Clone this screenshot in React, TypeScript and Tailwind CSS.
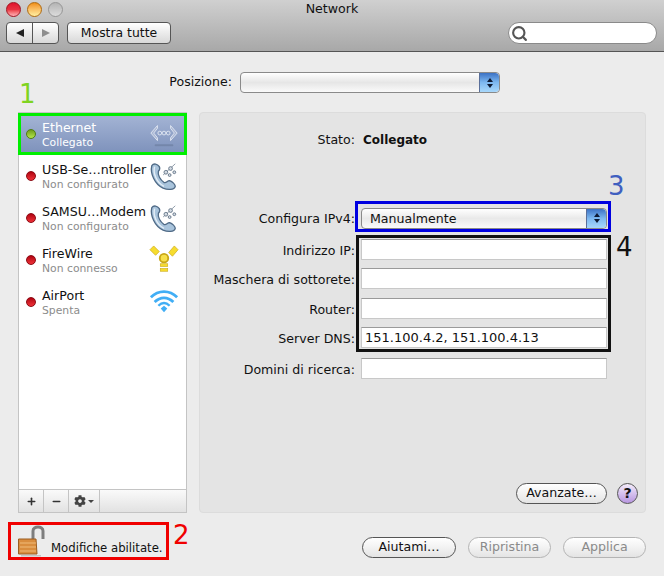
import { Minus, Plus, Search } from "lucide-react";
import { FaCog } from "react-icons/fa";

type Service = {
  name: string;
  status: string;
  dot: "green" | "red";
  icon: "ethernet" | "phone" | "firewire" | "wifi";
};

const services: Service[] = [
  { name: "Ethernet", status: "Collegato", dot: "green", icon: "ethernet" },
  { name: "USB-Se…ntroller", status: "Non configurato", dot: "red", icon: "phone" },
  { name: "SAMSU…Modem", status: "Non configurato", dot: "red", icon: "phone" },
  { name: "FireWire", status: "Non connesso", dot: "red", icon: "firewire" },
  { name: "AirPort", status: "Spenta", dot: "red", icon: "wifi" },
];

const fields = [
  { label: "Indirizzo IP:", value: "", top: "mt-[10px]" },
  { label: "Maschera di sottorete:", value: "", top: "mt-[8px]" },
  { label: "Router:", value: "", top: "mt-[9px]" },
  { label: "Server DNS:", value: "151.100.4.2, 151.100.4.13", top: "mt-[8px]" },
  { label: "Domini di ricerca:", value: "", top: "mt-[10px]" },
];

function ServiceIcon({ icon }: { icon: Service["icon"] }) {
  if (icon === "ethernet") {
    return (
      <svg width="30" height="32" viewBox="0 0 32 32" fill="none">
        <path d="M9 7 L2 15 L9 23 L9 20 L5 15 L9 10 Z" fill="#aab7d3" stroke="#dfe5f1" strokeWidth="1" />
        <path d="M23 7 L30 15 L23 23 L23 20 L27 15 L23 10 Z" fill="#aab7d3" stroke="#dfe5f1" strokeWidth="1" />
        <circle cx="11.5" cy="15" r="2" stroke="#dfe5f1" />
        <circle cx="16" cy="15" r="2" stroke="#dfe5f1" />
        <circle cx="20.5" cy="15" r="2" stroke="#dfe5f1" />
        <rect x="6" y="27" width="20" height="2" rx="1" fill="#7486aa" />
      </svg>
    );
  }
  if (icon === "phone") {
    return (
      <svg width="30" height="32" viewBox="0 0 32 32" fill="none">
        <path
          d="M3 5 C1 13 6 25 15 29 C20 31 27 31 28 27 C28 25 25 22 22 21 C19 21 19 24 16 23 C12 20 9 15 10 11 C12 9 12 8 11 6 C9 3 5 2 3 5 Z"
          fill="#a9c4dc"
          stroke="#4f6a86"
          strokeWidth="1.4"
        />
        <path d="M6 6 C4 13 8 23 16 27" stroke="#e4eef7" strokeWidth="1.5" />
        <path d="M15 15 L28 3" stroke="#8d9aa8" strokeWidth="1" />
        <circle cx="18" cy="12" r="2" fill="#d4dbe3" stroke="#66778a" />
        <circle cx="23" cy="8" r="2" fill="#d4dbe3" stroke="#66778a" />
        <circle cx="27" cy="12" r="1.5" fill="#d4dbe3" stroke="#66778a" />
        <circle cx="22" cy="15" r="1.5" fill="#d4dbe3" stroke="#66778a" />
      </svg>
    );
  }
  if (icon === "firewire") {
    return (
      <svg width="30" height="32" viewBox="0 0 32 32" fill="none">
        <path d="M1 5 L5 1 L11 7 L7 11 Z" fill="#f6dc2e" stroke="#c9a715" strokeWidth="0.7" />
        <path d="M21 8 L27 1 L31 5 L25 12 Z" fill="#f6dc2e" stroke="#c9a715" strokeWidth="0.7" />
        <circle cx="16" cy="14" r="4.5" fill="#f7e04a" stroke="#c9a715" strokeWidth="2" />
        <rect x="12" y="20" width="8" height="3" fill="#f6dc2e" stroke="#c9a715" strokeWidth="0.6" />
        <rect x="12" y="25" width="8" height="3" fill="#f6dc2e" stroke="#c9a715" strokeWidth="0.6" />
      </svg>
    );
  }
  return (
    <svg width="30" height="32" viewBox="0 0 32 32" fill="none">
      <path d="M2 11 C10 3 22 3 30 11" stroke="#41aef5" strokeWidth="3" />
      <path d="M6 16 C12 10 20 10 26 16" stroke="#41aef5" strokeWidth="3" />
      <path d="M10 20 C14 16 18 16 22 20" stroke="#41aef5" strokeWidth="2.5" />
      <path d="M12.5 23 L16 20 L19.5 23 L16 27 Z" fill="#41aef5" />
    </svg>
  );
}

function StatusDot({ color }: { color: Service["dot"] }) {
  return (
    <span
      className={`h-[10px] w-[10px] shrink-0 rounded-full border ${
        color === "green"
          ? "border-[#4e7d12] bg-gradient-to-b from-[#6f9d1a] to-[#b4e84a]"
          : "border-[#8c0a12] bg-gradient-to-b from-[#b00010] to-[#f03038]"
      }`}
    />
  );
}

function Stepper() {
  return (
    <span className="flex h-full w-[20px] flex-col items-center justify-center gap-[2px] rounded-r-[4px] border-l border-[#5a6f9a] bg-gradient-to-b from-[#3d72c4] via-[#7db8f0] to-[#a8d8fb]">
      <span className="h-0 w-0 border-x-[3px] border-b-[4px] border-x-transparent border-b-[#0d1a33]" />
      <span className="h-0 w-0 border-x-[3px] border-t-[4px] border-x-transparent border-t-[#0d1a33]" />
    </span>
  );
}

function Pill({ label, disabled, className }: { label: string; disabled?: boolean; className: string }) {
  return (
    <button
      className={`flex h-[21px] items-center justify-center rounded-full border bg-gradient-to-b from-white via-[#f2f2f2] to-[#e4e4e4] text-[12.6px] ${
        disabled ? "border-[#b4b4b4] text-[#8a8a8a]" : "border-[#555555] text-[#111111]"
      } ${className}`}
    >
      {label}
    </button>
  );
}

export default function App() {
  return (
    <div className="relative flex h-[576px] w-[664px] flex-col overflow-hidden bg-[#ececec] font-['DejaVu_Sans',sans-serif] text-[12.6px] text-[#111111]">
      {/* TOOLBAR */}
      <header className="h-[52px] shrink-0 border-b border-[#555555] bg-gradient-to-b from-[#d0d0d0] to-[#a8a8a8] px-[6px]">
        <div className="grid h-[22px] grid-cols-3 items-center">
          <div className="flex gap-[6px] pb-[4px]">
            <span className="h-[15px] w-[15px] rounded-full border border-[#a01420] bg-gradient-to-b from-[#e0102c] via-[#e83040] to-[#ffb0b8]" />
            <span className="h-[15px] w-[15px] rounded-full border border-[#b06a10] bg-gradient-to-b from-[#f09010] to-[#fff0a0]" />
            <span className="h-[15px] w-[15px] rounded-full border border-[#969696] bg-gradient-to-b from-[#b4b4b4] to-[#dcdcdc]" />
          </div>
          <div className="pb-[5px] text-center">Network</div>
        </div>

        <div className="flex h-[22px] items-center">
          <div className="flex h-[22px] w-[53px] rounded-[4px] border border-[#555555] bg-gradient-to-b from-white to-[#d8d8d8]">
            <span className="flex w-[26px] items-center justify-center border-r border-[#555555]">
              <span className="h-0 w-0 border-y-[4px] border-r-[8px] border-y-transparent border-r-[#222222]" />
            </span>
            <span className="flex flex-1 items-center justify-center">
              <span className="h-0 w-0 border-y-[4px] border-l-[8px] border-y-transparent border-l-[#8e8e8e]" />
            </span>
          </div>
          <button className="ml-[8px] h-[22px] w-[104px] rounded-[4px] border border-[#555555] bg-gradient-to-b from-white to-[#d8d8d8] text-[12.4px]">
            Mostra tutte
          </button>
          <div className="ml-auto mr-[1px] flex h-[22px] w-[149px] items-center rounded-full border border-[#8a8a8a] bg-white pl-[2px]">
            <Search size={17} strokeWidth={3} className="text-[#555555]" />
          </div>
        </div>
      </header>

      {/* POSIZIONE */}
      <div className="mt-[20px] flex h-[21px] shrink-0 items-center pl-[160px]">
        <span className="w-[72px] text-right">Posizione:</span>
        <div className="ml-[8px] flex h-[21px] w-[260px] justify-end rounded-[4px] border border-[#8a8a8a] bg-gradient-to-b from-white via-[#e6e6e6] to-[#fafafa]">
          <Stepper />
        </div>
      </div>

      {/* MAIN */}
      <div className="mt-[19px] flex h-[401px] shrink-0 gap-[12px] pl-[18px]">
        <aside className="flex w-[169px] flex-col border border-[#c4c4c4] bg-white">
          <div className="flex-1">
            {services.map((service, i) => (
              <div
                key={service.name}
                className={`flex h-[42px] items-center pl-[7px] pr-[7px] ${
                  i === 0 ? "bg-gradient-to-b from-[#a6b6d6] to-[#7c90ba] text-white" : ""
                }`}
              >
                <StatusDot color={service.dot} />
                <div className="ml-[6px] min-w-0 flex-1 whitespace-nowrap pt-[1px] leading-[15px]">
                  <div>{service.name}</div>
                  <div className={`text-[10.8px] ${i === 0 ? "text-white" : "text-[#8c8c8c]"}`}>{service.status}</div>
                </div>
                <ServiceIcon icon={service.icon} />
              </div>
            ))}
          </div>
          <div className="flex h-[23px] border-t border-[#c4c4c4] bg-gradient-to-b from-[#fafafa] to-[#e2e2e2] text-[#333333]">
            <span className="flex w-[25px] items-center justify-center border-r border-[#c4c4c4]">
              <Plus size={11} strokeWidth={3.5} />
            </span>
            <span className="flex w-[25px] items-center justify-center border-r border-[#c4c4c4]">
              <Minus size={11} strokeWidth={3.5} />
            </span>
            <span className="flex w-[31px] items-center justify-center gap-[2px] border-r border-[#c4c4c4]">
              <FaCog size={12} className="text-[#444444]" />
              <span className="h-0 w-0 border-x-[3px] border-t-[3px] border-x-transparent border-t-[#444444]" />
            </span>
          </div>
        </aside>

        <section className="flex w-[447px] flex-col rounded-[4px] border border-[#dcdcdc] bg-[#e4e4e4]">
          <div className="mt-[18px] flex items-center">
            <span className="w-[155px] text-right">Stato:</span>
            <span className="ml-[8px] text-[12px] font-bold">Collegato</span>
          </div>

          <div className="mt-[58px] flex items-center">
            <span className="w-[155px] pt-[1px] text-right leading-[15px]">Configura IPv4:</span>
            <div className="ml-[6px] flex h-[21px] w-[246px] items-center justify-between rounded-[4px] border border-[#8a8a8a] bg-gradient-to-b from-white via-[#e9e9e9] to-[#fafafa] pl-[8px]">
              <span className="pt-[1px] leading-[15px]">Manualmente</span>
              <Stepper />
            </div>
          </div>

          {fields.map((field) => (
            <div key={field.label} className={`flex items-center ${field.top}`}>
              <span className="w-[155px] whitespace-nowrap pt-[3px] text-right leading-[15px]">{field.label}</span>
              <div className="ml-[6px] flex h-[21px] w-[246px] items-center border border-t-[#9a9a9a] border-r-[#c8c8c8] border-b-[#c8c8c8] border-l-[#c8c8c8] bg-white pl-[3px] text-[13px]">
                {field.value}
              </div>
            </div>
          ))}

          <div className="mt-auto mb-[8px] flex items-center">
            <Pill label="Avanzate…" className="ml-[316px] w-[91px]" />
            <button className="ml-[10px] flex h-[21px] w-[21px] items-center justify-center rounded-full border border-[#555555] bg-gradient-to-b from-[#f4ecfa] to-[#b896e0] text-[14px] font-bold">
              ?
            </button>
          </div>
        </section>
      </div>

      {/* FOOTER */}
      <footer className="flex flex-1 items-start pl-[18px]">
        <div className="mt-[9px] flex h-[36px] w-[145px] items-end">
          <svg width="27" height="33" viewBox="0 0 27 33" fill="none" className="shrink-0">
            <path d="M15 15 L15 6 C15 0.5 25 0.5 25 6 L25 14" stroke="#7e7e7e" strokeWidth="3" />
            <path d="M0.5 14 L18 14 L19 29 L0.5 29 Z" fill="#d98d3e" stroke="#9b5d20" strokeWidth="1" />
            <path d="M2 18 H18 M2 22 H18 M2 26 H18" stroke="#f0bb78" strokeWidth="1" />
            <rect x="3" y="30" width="20" height="1.5" fill="#c4c4c4" />
          </svg>
          <span className="ml-[6px] whitespace-nowrap text-[11.7px]">Modifiche abilitate.</span>
        </div>
        <div className="mt-[24px] ml-[199px] flex gap-[12px]">
          <Pill label="Aiutami…" className="w-[94px]" />
          <Pill label="Ripristina" disabled className="w-[83px]" />
          <Pill label="Applica" disabled className="w-[83px]" />
        </div>
      </footer>

      {/* ANNOTATIONS */}
      <div className="absolute left-[18px] top-[113px] h-[42px] w-[169px] border-[3px] border-[#00ee00]" />
      <div className="absolute left-[355px] top-[201px] h-[31px] w-[256px] border-[3px] border-[#0000e0]" />
      <div className="absolute left-[356px] top-[235px] h-[117px] w-[255px] border-[3px] border-[#111111]" />
      <div className="absolute left-[8px] top-[522px] h-[38px] w-[161px] border-[3px] border-[#f00000]" />
      <span className="absolute left-[19px] top-[79px] text-[26px] leading-[30px] text-[#7ed321]">1</span>
      <span className="absolute left-[173px] top-[520px] text-[26px] leading-[30px] text-[#f00000]">2</span>
      <span className="absolute left-[608px] top-[171px] text-[26px] leading-[30px] text-[#3f5fc0]">3</span>
      <span className="absolute left-[616px] top-[232px] text-[26px] leading-[30px] text-[#111111]">4</span>
    </div>
  );
}
